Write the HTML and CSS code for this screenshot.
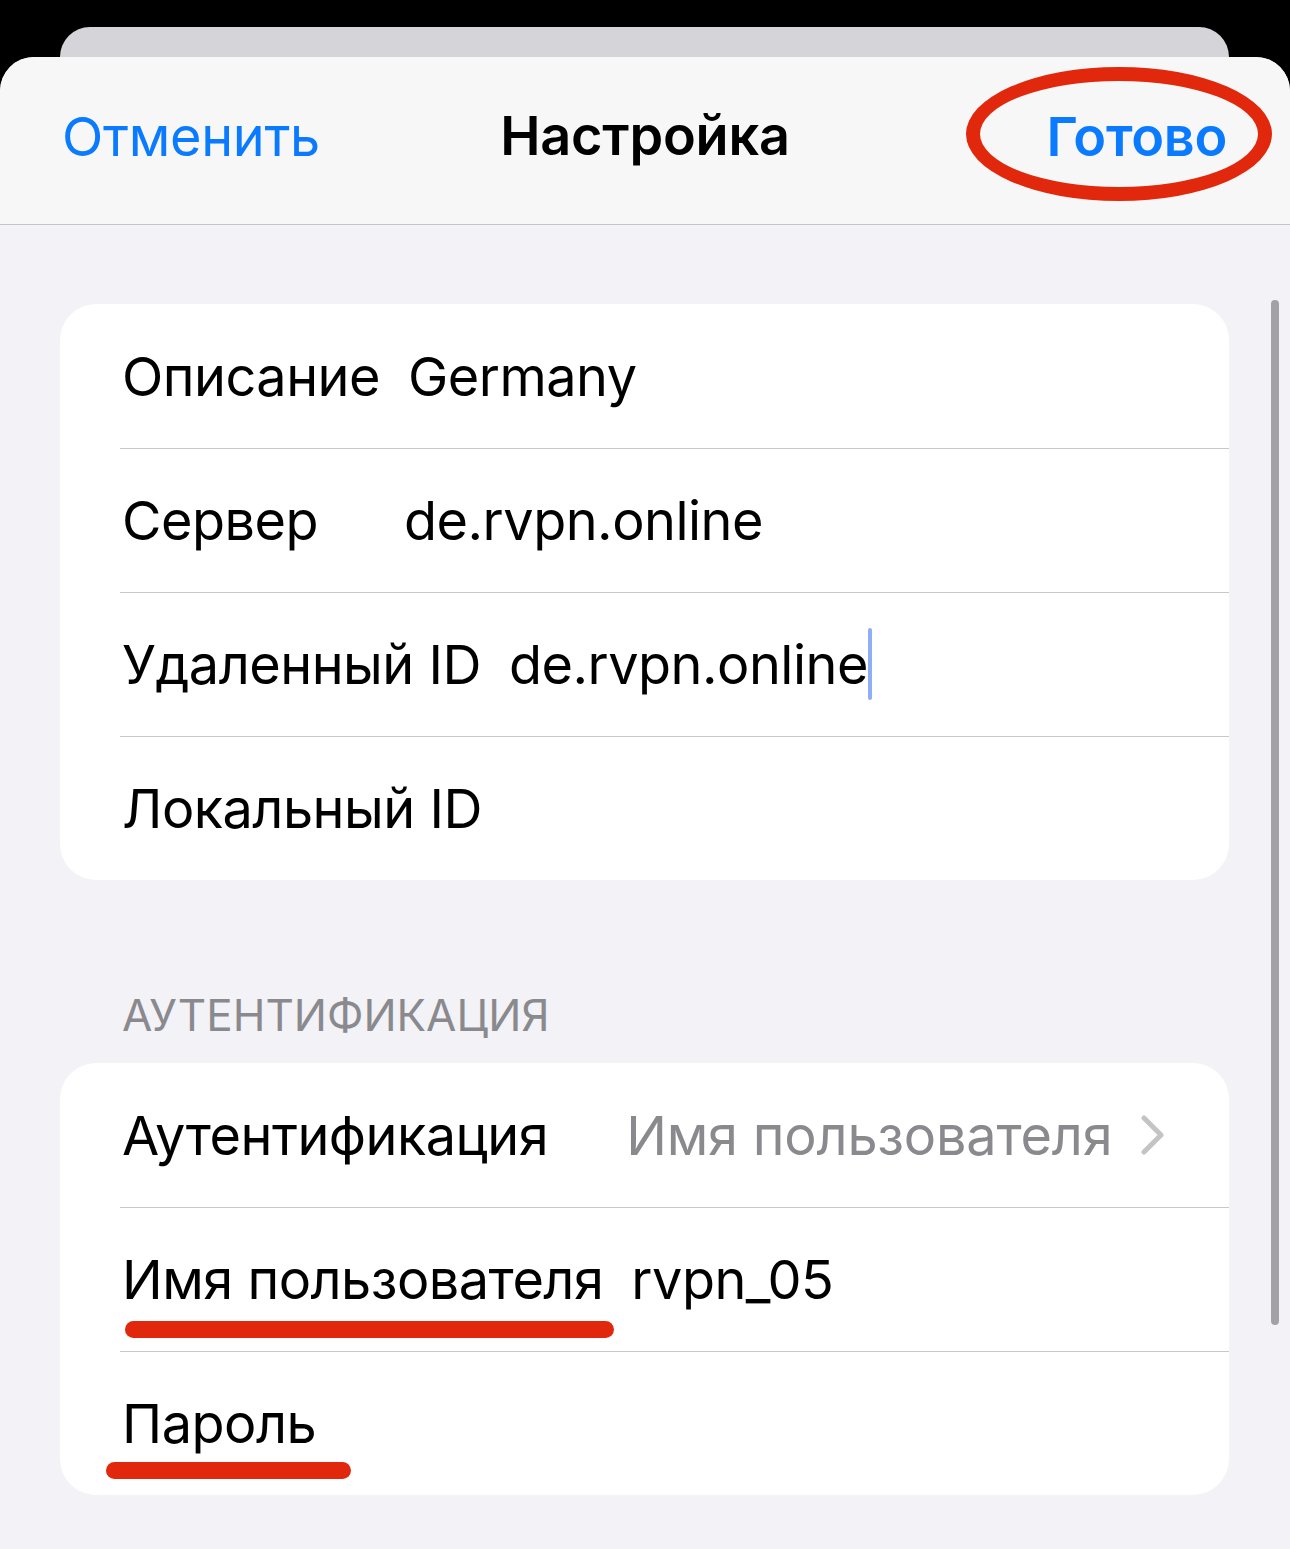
FILE: index.html
```html
<!DOCTYPE html>
<html lang="ru">
<head>
  <meta charset="UTF-8">
  <meta name="viewport" content="width=device-width, initial-scale=1.0">
  <title>Настройка</title>
  <link rel="stylesheet" href="styles.css">
</head>
<body>

  <div class="back-sheet"></div>

  <div class="sheet">
    <header class="nav-bar">
      <span class="nav-btn">Отменить</span>
      <h1 class="nav-title">Настройка</h1>
      <span class="nav-btn nav-done">
        Готово
        <span class="mark-ring"></span>
      </span>
    </header>

    <main class="content">
      <section class="group first-group">
        <div class="row">
          <span class="label">Описание</span>
          <span class="value">Germany</span>
        </div>
        <div class="row">
          <span class="label label-server">Сервер</span>
          <span class="value">de.rvpn.online</span>
        </div>
        <div class="row">
          <span class="label">Удаленный ID</span>
          <span class="value">de.rvpn.online<span class="caret"></span></span>
        </div>
        <div class="row">
          <span class="label">Локальный ID</span>
        </div>
      </section>

      <h2 class="group-title">Аутентификация</h2>

      <section class="group">
        <div class="row">
          <span class="label">Аутентификация</span>
          <span class="value value-muted">Имя пользователя</span>
          <svg class="chevron" width="26" height="40" viewBox="0 0 26 40">
            <polyline points="4,3 21,20 4,37" fill="none" stroke="#c4c4c7" stroke-width="5" stroke-linecap="round" stroke-linejoin="round"/>
          </svg>
        </div>
        <div class="row">
          <span class="label">
            Имя пользователя
            <span class="mark-line mark-user"></span>
          </span>
          <span class="value">rvpn_05</span>
        </div>
        <div class="row">
          <span class="label">
            Пароль
            <span class="mark-line mark-pass"></span>
          </span>
        </div>
      </section>
    </main>

    <div class="scroll-thumb"></div>
  </div>

</body>
</html>
```

FILE: styles.css
```css
* {
  box-sizing: border-box;
}
body {
  margin: 0;
  width: 1290px;
  height: 1549px;
  overflow: hidden;
  background-color: #000;
  font-family: Inter, "Noto Sans", sans-serif;
  color: #000;
  padding-top: 27px;
}
.back-sheet {
  height: 30px;
  margin: 0 61px 0 60px;
  background-color: #d5d5d9;
  border-radius: 30px 30px 0 0;
}
.sheet {
  position: relative;
  height: 1492px;
  background-color: #f2f2f7;
  border-radius: 34px 34px 0 0;
  overflow: hidden;
}
.nav-bar {
  height: 168px;
  display: flex;
  align-items: center;
  justify-content: space-between;
  padding: 0 63px 8px 62px;
  background-color: #f7f7f7;
  border-bottom: 1px solid #c4c4c6;
}
.nav-btn {
  font-size: 54px;
  color: #0a7aff;
  letter-spacing: -0.3px;
}
.nav-done {
  position: relative;
  font-weight: 600;
}
.nav-title {
  position: absolute;
  left: 0;
  right: 0;
  top: 46px;
  margin: 0;
  text-align: center;
  font-size: 54px;
  font-weight: 600;
  letter-spacing: -0.2px;
  pointer-events: none;
}
.mark-ring {
  position: absolute;
  left: -81px;
  top: -37px;
  width: 306px;
  height: 134px;
  border: 14px solid #e1280c;
  border-radius: 50%;
}
.content {
  padding: 79px 61px 0 60px;
}
.group {
  background-color: #fff;
  border-radius: 36px;
  overflow: hidden;
}
.row {
  height: 144px;
  display: flex;
  align-items: center;
  gap: 28px;
  margin-left: 60px;
  padding-right: 40px;
  font-size: 54px;
  letter-spacing: -0.5px;
}
.row + .row {
  border-top: 1.5px solid #c8c8cb;
}
.label {
  position: relative;
  padding-left: 2px;
  white-space: nowrap;
}
.label-server {
  min-width: 256px;
}
.value {
  position: relative;
  white-space: nowrap;
}
.value-muted {
  color: #8a8a8e;
  margin-left: 50px;
  letter-spacing: -0.2px;
}
.chevron {
  flex-shrink: 0;
  margin-left: 0;
}
.caret {
  position: absolute;
  right: -4px;
  top: -4px;
  width: 4px;
  height: 72px;
  background-color: #8eaef5;
  border-radius: 2px;
}
.group-title {
  margin: 113px 0 26px 62px;
  font-size: 44px;
  font-weight: 400;
  color: #8a8a8e;
  text-transform: uppercase;
  letter-spacing: 0;
  line-height: 1;
}
.mark-line {
  position: absolute;
  height: 17px;
  background-color: #e1280c;
  border-radius: 9px;
}
.mark-user {
  left: 5px;
  right: -11px;
  bottom: -26px;
}
.mark-pass {
  left: -14px;
  right: -35px;
  bottom: -23px;
}
.scroll-thumb {
  position: absolute;
  right: 11px;
  top: 243px;
  width: 8px;
  height: 1025px;
  background-color: #a1a1a6;
  border-radius: 4px;
}
```
